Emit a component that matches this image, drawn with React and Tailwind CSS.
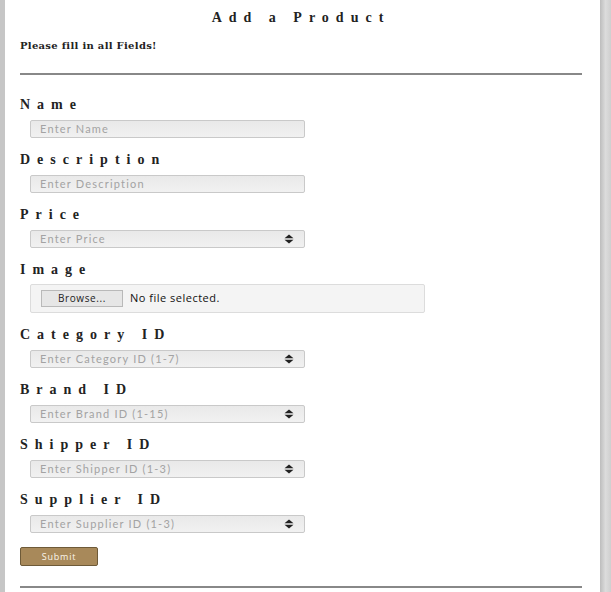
import React from 'react';

const fields = [
  { label: 'Name', placeholder: 'Enter Name' },
  { label: 'Description', placeholder: 'Enter Description' },
  { label: 'Price', placeholder: 'Enter Price', spin: true },
  { label: 'Image', file: true },
  { label: 'Category ID', placeholder: 'Enter Category ID (1-7)', spin: true },
  { label: 'Brand ID', placeholder: 'Enter Brand ID (1-15)', spin: true },
  { label: 'Shipper ID', placeholder: 'Enter Shipper ID (1-3)', spin: true },
  { label: 'Supplier ID', placeholder: 'Enter Supplier ID (1-3)', spin: true },
];

function Spinner() {
  return (
    <svg width="10" height="10" viewBox="0 0 10 10" className="shrink-0">
      <path d="M5 0.5 L9.5 4.3 L0.5 4.3 Z" fill="#222" />
      <path d="M5 9.5 L9.5 5.7 L0.5 5.7 Z" fill="#222" />
    </svg>
  );
}

function Field({ f }) {
  return (
    <div className="mb-[14px]">
      <div className="font-['Liberation_Serif',serif] font-bold text-[14px] leading-[16px] tracking-[0.5em] text-[#222]">
        {f.label}
      </div>
      {f.file ? (
        <div className="mt-[6px] ml-[10px] w-[395px] h-[29px] bg-[#f4f4f4] border border-[#dcdcdc] rounded-[2px] flex items-center pl-[10px] gap-[7px]">
          <div className="w-[82px] h-[17px] bg-[#e6e6e6] border border-[#b9b9b9] flex items-center justify-center font-['Open_Sans',sans-serif] text-[10px] tracking-[0.6px] text-[#222]">
            Browse...
          </div>
          <span className="font-['Open_Sans',sans-serif] text-[11px] tracking-[0.5px] text-[#111]">No file selected.</span>
        </div>
      ) : (
        <div className="mt-[7px] ml-[10px] w-[275px] h-[18px] bg-gradient-to-b from-[#e9e9e9] to-[#f1f1f1] border border-[#c9c9c9] rounded-[2px] flex items-center justify-between pl-[9px] pr-[10px]">
          <span className="font-['Lato',sans-serif] text-[11px] tracking-[1.2px] text-[#a3a3a3]">{f.placeholder}</span>
          {f.spin && <Spinner />}
        </div>
      )}
    </div>
  );
}

export default function App() {
  return (
    <div className="flex w-[611px] h-[592px] bg-white overflow-hidden">
      <div className="w-[5px] bg-[#c6c6c6] shrink-0" />
      <div className="flex-1 pl-[15px] pr-[18px]">
        <div className="pt-[10px] text-center font-['Liberation_Serif',serif] font-bold text-[14px] leading-[16px] tracking-[0.5em] text-[#222]">
          Add a Product
        </div>
        <div className="mt-[14px] font-['DejaVu_Serif',serif] font-bold text-[10px] leading-[12px] tracking-[0.3px] text-[#222]">
          Please fill in all Fields!
        </div>
        <div className="mt-[21px] border-t-2 border-[#888]" />
        <div className="mt-[22px]">
          {fields.map((f) => (
            <Field key={f.label} f={f} />
          ))}
        </div>
        <button className="block mt-[1px] w-[78px] h-[19px] bg-[#a8895a] border border-[#6e5a38] rounded-[2px] font-['Open_Sans',sans-serif] text-[9px] tracking-[0.8px] text-[#fbf6ec]">
          Submit
        </button>
        <div className="mt-[20px] border-t-2 border-[#888]" />
      </div>
      <div className="w-[11px] shrink-0 bg-gradient-to-r from-[#bdbdbd] via-[#dcdcdc] to-[#cfcfcf]" />
    </div>
  );
}
